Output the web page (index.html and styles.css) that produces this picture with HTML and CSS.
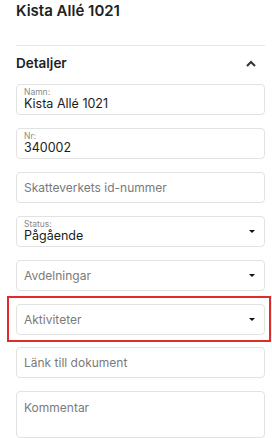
FILE: index.html
```html
<!DOCTYPE html>
<html lang="sv">
<head>
    <meta charset="UTF-8">
    <meta name="viewport" content="width=device-width, initial-scale=1.0">
    <title>Kista Allé 1021</title>
    <link rel="stylesheet" href="styles.css">
</head>
<body>
    <h1 class="page-title">Kista Allé 1021</h1>

    <div class="section">
        <div class="section-head">
            <h2>Detaljer</h2>
            <svg class="chevron" width="10" height="7" viewBox="0 0 10 7">
                <polyline points="1,6 5,2 9,6" fill="none" stroke="#333" stroke-width="2"/>
            </svg>
        </div>

        <div class="field filled">
            <span class="label">Namn:</span>
            <span class="value">Kista Allé 1021</span>
        </div>
        <div class="field filled">
            <span class="label">Nr:</span>
            <span class="value">340002</span>
        </div>
        <div class="field">
            <span class="placeholder">Skatteverkets id-nummer</span>
        </div>
        <div class="field filled select">
            <span class="label">Status:</span>
            <span class="value">Pågående</span>
            <span class="caret"></span>
        </div>
        <div class="field select">
            <span class="placeholder">Avdelningar</span>
            <span class="caret"></span>
        </div>
        <div class="highlight">
            <div class="field select">
                <span class="placeholder">Aktiviteter</span>
                <span class="caret"></span>
            </div>
        </div>
        <div class="field">
            <span class="placeholder">Länk till dokument</span>
        </div>
        <div class="field textarea">
            <span class="placeholder">Kommentar</span>
        </div>
    </div>
</body>
</html>
```

FILE: styles.css
```css
body {
    font-family: Inter, "Noto Sans", sans-serif;
    margin: 0;
    padding: 0 7px 0 16px;
    background: #fff;
    color: #212121;
}
.page-title {
    font-size: 15px;
    font-weight: 600;
    margin: 0;
    padding-top: 2px;
    height: 43px;
    line-height: 18px;
    border-bottom: 1px solid #e6e6e6;
}
.section-head {
    display: flex;
    align-items: center;
    justify-content: space-between;
    height: 34px;
    margin-bottom: 4px;
}
.section-head h2 {
    font-size: 13.5px;
    font-weight: 600;
    margin: 0;
}
.chevron {
    margin-right: 9px;
}
.field {
    position: relative;
    box-sizing: border-box;
    height: 31px;
    margin-bottom: 13px;
    border: 1px solid #e2e2e2;
    border-radius: 4px;
    padding: 0 7px;
    display: flex;
    flex-direction: column;
    justify-content: center;
}
.field.filled {
    justify-content: flex-start;
    padding-top: 3px;
}
.label {
    font-size: 8.5px;
    line-height: 9px;
    color: #8a8a8a;
}
.value {
    font-size: 12.5px;
    line-height: 13px;
    color: #1c1c1c;
}
.placeholder {
    font-size: 12px;
    color: #7a7a7a;
}
.caret {
    position: absolute;
    right: 9px;
    top: 13px;
    width: 0;
    height: 0;
    border-left: 3px solid transparent;
    border-right: 3px solid transparent;
    border-top: 3px solid #111;
}
.highlight {
    margin: -8px -6px 5px -9px;
    border: 2px solid #e02b2b;
    padding: 6px 4px 5px 7px;
}
.highlight .field {
    margin-bottom: 0;
}
.field.textarea {
    height: 47px;
    justify-content: flex-start;
    padding-top: 8px;
}
```
